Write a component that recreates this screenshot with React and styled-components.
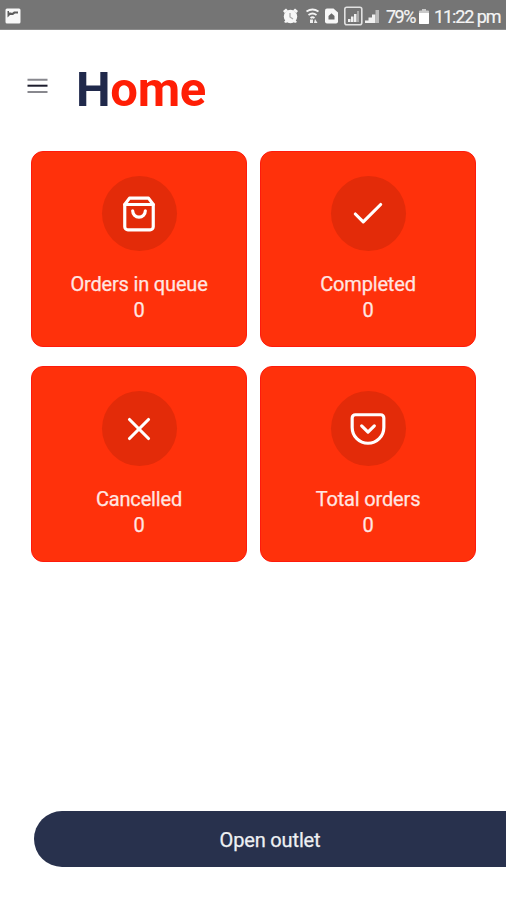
import React from 'react';
import styled, { createGlobalStyle } from 'styled-components';
import { FiCheck, FiPocket, FiShoppingBag, FiX } from 'react-icons/fi';

const GlobalStyle = createGlobalStyle`
  * {
    box-sizing: border-box;
  }
  body {
    margin: 0;
    background: #ffffff;
    font-family: Roboto, sans-serif;
  }
`;

const Screen = styled.div`
  display: flex;
  flex-direction: column;
  width: 100%;
  height: 900px;
  overflow: hidden;
`;
const StatusBar = styled.div`
  flex: none;
  display: flex;
  align-items: center;
  justify-content: space-between;
  height: 30px;
  padding: 2px 6px 0 5px;
  background: #757575;
  color: #f4f4f4;
  border-bottom: 1px solid #8c8c8c;
`;
const StatusGroup = styled.div`
  display: flex;
  align-items: center;
  svg {
    display: block;
    flex: none;
  }
`;
const StatusText = styled.span`
  width: ${({ $width }) => $width}px;
  margin-left: ${({ $gap }) => $gap}px;
  font-size: 18px;
  line-height: 26px;
  padding-top: 2px;
  letter-spacing: ${({ $spacing }) => $spacing}px;
  white-space: nowrap;
  -webkit-text-stroke: 0.2px currentColor;
`;
const Header = styled.header`
  flex: none;
  display: flex;
  height: 121px;
  padding: 31px 0 0 27px;
`;
const MenuButton = styled.button`
  width: 21px;
  height: 15px;
  margin: 17px 0 0;
  padding: 0;
  border: 0;
  background: none;
  svg {
    display: block;
  }
`;
const Title = styled.h1`
  margin: 0 0 0 28px;
  font-weight: 700;
  font-size: 49px;
  line-height: 58px;
  letter-spacing: -0.3px;
  color: #ff1e05;
`;
const Initial = styled.span`
  color: #20294b;
`;
const Grid = styled.main`
  flex: none;
  display: grid;
  grid-template-columns: 216px 216px;
  gap: 19px 13px;
  padding-left: 31px;
`;
const Card = styled.section`
  display: flex;
  flex-direction: column;
  align-items: center;
  height: 196px;
  padding-top: 24px;
  border: 1px solid #ff1a0c;
  border-radius: 12px;
  background: #ff310b;
`;
const Circle = styled.div`
  display: flex;
  align-items: center;
  justify-content: center;
  width: 75px;
  height: 75px;
  margin-bottom: 20px;
  border-radius: 50%;
  background: #e32b09;
  color: #ffffff;
`;
const Label = styled.div`
  font-size: 20px;
  line-height: 26px;
  letter-spacing: -0.17px;
  color: #ffe6e2;
  -webkit-text-stroke: 0.25px currentColor;
`;
const OutletButton = styled.button`
  flex: none;
  height: 56px;
  margin: auto 0 33px 34px;
  padding: 2px 0 0;
  border: 0;
  border-radius: 28px 0 0 28px;
  background: #28314d;
  color: #eef0f3;
  font-family: inherit;
  font-size: 20px;
  letter-spacing: -0.15px;
  -webkit-text-stroke: 0.25px currentColor;
`;

const stats = [
  { name: 'Orders in queue', value: 0, icon: FiShoppingBag },
  { name: 'Completed', value: 0, icon: FiCheck },
  { name: 'Cancelled', value: 0, icon: FiX },
  { name: 'Total orders', value: 0, icon: FiPocket },
];

const PictureIcon = () => (
  <svg width="16" height="16" viewBox="0 0 16 16">
    <rect x="0.5" y="0.5" width="15" height="15" rx="1.5" fill="#f8f8f8" />
    <path d="M2.500 3H4v1.500h2L7 5l2-1.500h4V5.500h-3L8 7H5L2.500 9.500z" fill="#5c5c5c" />
  </svg>
);

// alarm, wifi, sim card, boxed signal and plain signal
const SignalIcons = () => (
  <svg width="98" height="20" viewBox="0 0 98 20">
    <g fill="#f6f6f6">
      <circle cx="8.500" cy="10.500" r="6.700" />
      <path d="M1 5l3-2.500 2 2L2.500 7zM16 5l-3-2.500-2 2L14.500 7zM2 16l2-2.500 2 2-2 1.500zM15 16l-2-2.500-2 2 2 1.500z" />
    </g>
    <path d="M8 7v4l3 2" fill="none" stroke="#aaa" strokeWidth="1.300" />
    <g fill="none" stroke="#f4f4f4" strokeWidth="1.800">
      <path d="M24.500 5.500q6-4 12 0M26.500 9q4-3 8 0M28.500 12q2-1.500 4 0" />
    </g>
    <path d="M28 13.500h3V17h-3zM33 13l2.500 4H32z" fill="#eee" />
    <path d="M43 4.500a2 2 0 012-2h6.500l4.500 4V15.500a2 2 0 01-2 2H45a2 2 0 01-2-2z" fill="#f8f8f8" />
    <path d="M46.500 10l3-2.800 3 2.800V13.500h-6z" fill="#6d6d6d" />
    <rect x="62.800" y="1.300" width="17" height="17.500" rx="2" fill="none" stroke="#e2e2e2" strokeWidth="1.600" />
    <path d="M66 13h2.500v3H66zM69 10.500h2.500V16H69zM72 8h2.500v8H72z" fill="#f0f0f0" />
    <path d="M75 5h2v11h-2z" fill="#aaa" />
    <path d="M83 14.500h3.500V17H83zM86.500 11.500H90V17h-3.500zM90 8.500h3.500V17H90z" fill="#f0f0f0" />
    <path d="M93.500 4h3.500V17h-3.500z" fill="#b9b9b9" />
  </svg>
);

const BatteryIcon = () => (
  <svg width="10" height="16" viewBox="0 0 10 16">
    <path d="M3 1h4v1.500h2a1 1 0 011 1V15a1 1 0 01-1 1H1a1 1 0 01-1-1V3.500a1 1 0 011-1h2z" fill="#c9c9c9" />
    <path d="M0 5h10v10a1 1 0 01-1 1H1a1 1 0 01-1-1z" fill="#ffffff" />
  </svg>
);

const MenuIcon = () => (
  <svg width="21" height="15" viewBox="0 0 21 15">
    <path d="M0.500 1.700h20M0.500 14h20" stroke="#88888e" strokeWidth="2" />
    <path d="M0.500 7.700h20" stroke="#1c1c2c" strokeWidth="2" />
  </svg>
);

const StatCard = ({ item }) => {
  const Icon = item.icon;
  return (
    <Card>
      <Circle>
        <Icon size={38} />
      </Circle>
      <Label>{item.name}</Label>
      <Label>{item.value}</Label>
    </Card>
  );
};

const App = () => {
  return (
    <Screen>
      <GlobalStyle />
      <StatusBar>
        <StatusGroup>
          <PictureIcon />
        </StatusGroup>
        <StatusGroup>
          <SignalIcons />
          <StatusText $width={33} $gap={6} $spacing={-1.5}>79%</StatusText>
          <BatteryIcon />
          <StatusText $width={66} $gap={5} $spacing={-1.1}>11:22 pm</StatusText>
        </StatusGroup>
      </StatusBar>
      <Header>
        <MenuButton aria-label="Menu">
          <MenuIcon />
        </MenuButton>
        <Title>
          <Initial>H</Initial>ome
        </Title>
      </Header>
      <Grid>
        {stats.map((item) => (
          <StatCard key={item.name} item={item} />
        ))}
      </Grid>
      <OutletButton>Open outlet</OutletButton>
    </Screen>
  );
};

export default App;
